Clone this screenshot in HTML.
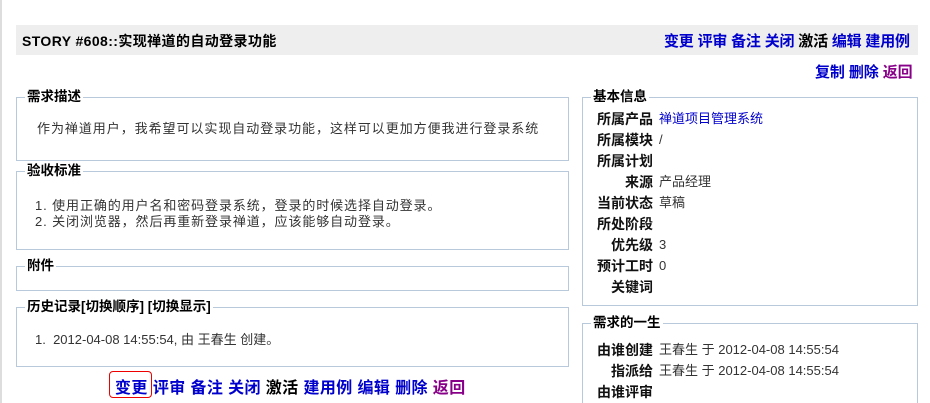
<!DOCTYPE html>
<html><head><meta charset="utf-8"><style>
*{margin:0;padding:0;box-sizing:border-box}
html,body{width:930px;height:403px;overflow:hidden}
body{background:#fff;font-family:"Liberation Sans","Noto Sans CJK SC",sans-serif;font-size:13px;color:#333;position:relative}
.a{position:absolute;white-space:nowrap}
.fs{position:absolute;border:1px solid #b8c9dc}
.lg{position:absolute;top:-9px;left:8px;background:#fff;font-weight:bold;color:#000;padding:0 2px;line-height:16px;font-size:13.5px}
b{color:#000}
.bl{color:#00c;font-weight:bold}
.pu{color:#808;font-weight:bold}
.r{position:absolute;left:0;width:330px;height:20px;line-height:20px}
.lb{position:absolute;left:0;width:70px;text-align:right;font-weight:bold;color:#111;font-size:14px}
.vl{position:absolute;left:76px}
</style></head><body>
<div class="a" style="left:0;top:0;width:2px;height:403px;background:#ddd"></div>
<div class="a" style="left:16px;top:25px;width:902px;height:30px;background:#eee"></div>
<div class="a" style="left:22px;top:31px;font-weight:bold;color:#000;font-size:14px;letter-spacing:0.4px">STORY #608::实现禅道的自动登录功能</div>
<div class="a" style="left:664px;top:30px;font-size:15px;letter-spacing:-0.2px"><span class="bl">变更 评审 备注 关闭</span> <b>激活</b> <span class="bl">编辑 建用例</span></div>
<div class="a" style="left:815px;top:61px;font-size:15px;letter-spacing:-0.1px"><span class="bl">复制 删除</span> <span class="pu">返回</span></div>

<div class="fs" style="left:16px;top:97px;width:553px;height:64px"><div class="lg">需求描述</div>
<div class="a" style="left:20px;top:20px;letter-spacing:0.95px">作为禅道用户，我希望可以实现自动登录功能，这样可以更加方便我进行登录系统</div></div>
<div class="fs" style="left:16px;top:171px;width:553px;height:79px"><div class="lg">验收标准</div>
<div class="a" style="left:18px;top:26px;line-height:16px;letter-spacing:0.9px">1. 使用正确的用户名和密码登录系统，登录的时候选择自动登录。<br>2. 关闭浏览器，然后再重新登录禅道，应该能够自动登录。</div></div>
<div class="fs" style="left:16px;top:266px;width:553px;height:25px"><div class="lg">附件</div></div>
<div class="fs" style="left:16px;top:307px;width:553px;height:60px"><div class="lg">历史记录[切换顺序] [切换显示]</div>
<div class="a" style="left:18px;top:21px">1.&nbsp; 2012-04-08 14:55:54, 由 王春生 创建。</div></div>
<div class="a" style="left:109px;top:371px;width:43px;height:27px;border:1px solid #e00;border-radius:4px"></div>
<div class="a" style="left:115px;top:374px;font-size:16px;letter-spacing:0.4px"><span class="bl">变更</span><span class="bl" style="margin-left:5px">评审 备注 关闭</span> <b>激活</b> <span class="bl">建用例 编辑 删除</span> <span class="pu">返回</span></div>

<div class="fs" style="left:582px;top:97px;width:336px;height:209px"><div class="lg">基本信息</div>
<div style="position:absolute;left:0;top:11px;width:330px">
<div class="r" style="top:0"><span class="lb">所属产品</span><span class="vl" style="color:#00c">禅道项目管理系统</span></div>
<div class="r" style="top:21px"><span class="lb">所属模块</span><span class="vl">/</span></div>
<div class="r" style="top:42px"><span class="lb">所属计划</span></div>
<div class="r" style="top:63px"><span class="lb">来源</span><span class="vl">产品经理</span></div>
<div class="r" style="top:84px"><span class="lb">当前状态</span><span class="vl">草稿</span></div>
<div class="r" style="top:105px"><span class="lb">所处阶段</span></div>
<div class="r" style="top:126px"><span class="lb">优先级</span><span class="vl">3</span></div>
<div class="r" style="top:147px"><span class="lb">预计工时</span><span class="vl">0</span></div>
<div class="r" style="top:168px"><span class="lb">关键词</span></div>
</div></div>
<div class="fs" style="left:582px;top:323px;width:336px;height:100px"><div class="lg">需求的一生</div>
<div style="position:absolute;left:0;top:16px;width:330px">
<div class="r" style="top:0"><span class="lb">由谁创建</span><span class="vl">王春生 于 2012-04-08 14:55:54</span></div>
<div class="r" style="top:21px"><span class="lb">指派给</span><span class="vl">王春生 于 2012-04-08 14:55:54</span></div>
<div class="r" style="top:42px"><span class="lb">由谁评审</span></div>
</div></div>
</body></html>
